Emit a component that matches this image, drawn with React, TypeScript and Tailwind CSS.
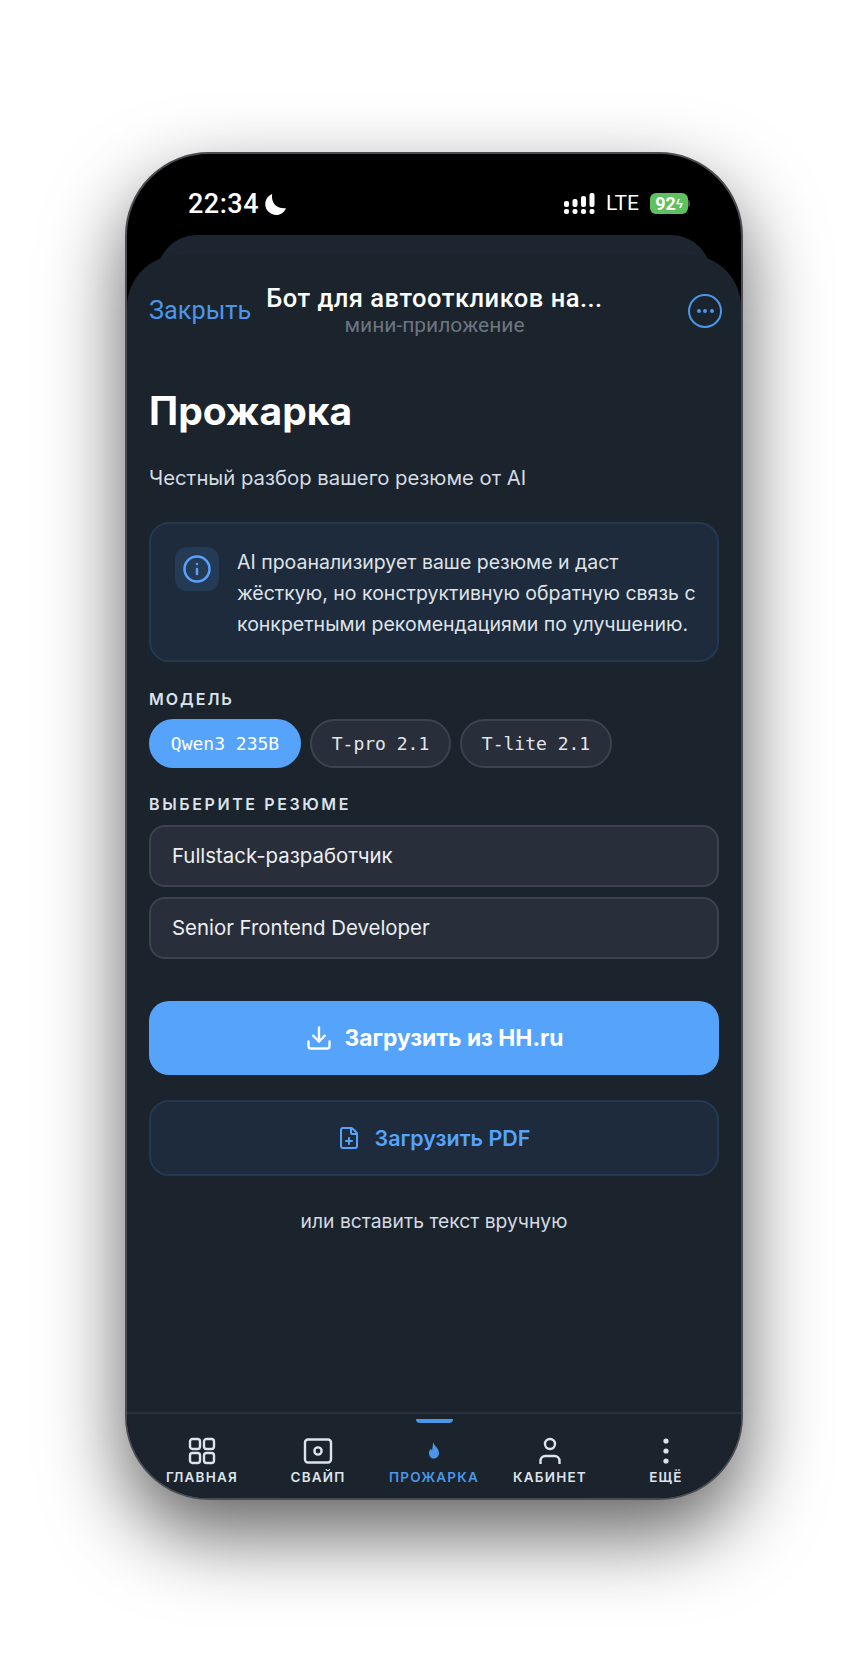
import React from 'react';
import { Download, FilePlus, Info } from 'lucide-react';

const models = [
  { id: 'qwen', name: 'Qwen3 235B', active: true, width: 'w-[152px]' },
  { id: 'tpro', name: 'T-pro 2.1', active: false, width: 'w-[141px]' },
  { id: 'tlite', name: 'T-lite 2.1', active: false, width: 'w-[152px]' },
];

const resumes = ['Fullstack-разработчик', 'Senior Frontend Developer'];

const GridIcon = () => (
  <svg width="28" height="28" viewBox="0 0 28 28" fill="none" stroke="currentColor" strokeWidth="2.4">
    <rect x="2" y="2" width="10" height="10" rx="2.5" />
    <rect x="16" y="2" width="10" height="10" rx="2.5" />
    <rect x="2" y="16" width="10" height="10" rx="2.5" />
    <rect x="16" y="16" width="10" height="10" rx="2.5" />
  </svg>
);

const SwipeIcon = () => (
  <svg width="30" height="28" viewBox="0 0 30 28" fill="none" stroke="currentColor" strokeWidth="2.4">
    <rect x="2" y="2.5" width="26" height="23" rx="3" />
    <circle cx="15" cy="14" r="3.6" />
  </svg>
);

const FlameIcon = () => (
  <svg width="28" height="28" viewBox="0 0 28 28" fill="currentColor">
    <path d="M13.500 5c.4 2.400 1.300 3.500 2.500 4.800 1.500 1.700 3 3.600 3 6.200 0 3.200-2.200 5.500-5 5.500s-5-2.300-5-5.300c0-2 .8-3.400 1.900-4.500.3.800.7 1.300 1.300 1.700.3-2.900.5-5.600 1.300-8.400z" />
  </svg>
);

const UserIcon = () => (
  <svg width="28" height="28" viewBox="0 0 28 28" fill="none" stroke="currentColor" strokeWidth="2.4">
    <circle cx="14" cy="7" r="5" />
    <path d="M4.500 27v-3c0-3 2.300-5 4.800-5h9.400c2.500 0 4.800 2 4.800 5v3" />
  </svg>
);

const DotsIcon = () => (
  <svg width="28" height="28" viewBox="0 0 28 28" fill="currentColor">
    <circle cx="14" cy="4" r="2.600" />
    <circle cx="14" cy="14" r="2.600" />
    <circle cx="14" cy="24" r="2.600" />
  </svg>
);

const tabs = [
  { id: 'home', title: 'ГЛАВНАЯ', icon: GridIcon },
  { id: 'swipe', title: 'СВАЙП', icon: SwipeIcon },
  { id: 'roast', title: 'ПРОЖАРКА', icon: FlameIcon, active: true },
  { id: 'account', title: 'КАБИНЕТ', icon: UserIcon },
  { id: 'more', title: 'ЕЩЁ', icon: DotsIcon },
];

const SignalIcon = () => (
  <svg width="31" height="21" viewBox="0 0 31 21" fill="white">
    <rect x="0" y="8" width="5" height="6" rx="2" />
    <rect x="0" y="16" width="5" height="5" rx="2" />
    <rect x="8.500" y="6" width="5" height="8" rx="2" />
    <rect x="8.500" y="16" width="5" height="5" rx="2" />
    <rect x="17" y="3" width="5" height="11" rx="2" />
    <rect x="17" y="16" width="5" height="5" rx="2" />
    <rect x="25.500" y="0" width="5" height="14" rx="2" />
    <rect x="25.500" y="16" width="5" height="5" rx="2" />
  </svg>
);

const MoonIcon = () => (
  <svg width="23" height="23" viewBox="0 0 22 22" fill="white">
    <path d="M7.800 1C6.700 9.500 11.500 15.200 21 14.500 19.500 18.500 15.800 21 11.700 21 6 21 1.200 16.500 1.200 10.800 1.200 6.400 3.800 2.600 7.800 1z" />
  </svg>
);

export default function App() {
  return (
    <div className="w-[868px] h-[1660px] bg-white overflow-hidden pt-[152px] pl-[125px] font-['Inter',sans-serif]">
      <div className="w-[618px] h-[1348px] rounded-[84px] bg-black border-2 border-[#4a4c52] overflow-hidden flex flex-col shadow-[0_34px_80px_rgba(0,0,0,0.62)]">
        {/* Status bar */}
        <div className="h-[81px] shrink-0 flex items-start justify-between pt-[35px] pl-[61px] pr-[51px]">
          <div className="flex items-center gap-[5px]">
            <span className="text-[27px] leading-[30px] font-medium text-white font-['Roboto',sans-serif] tracking-[0.5px]">22:34</span>
            <MoonIcon />
          </div>
          <div className="flex items-center pt-[2px]">
            <SignalIcon />
            <span className="ml-[11px] text-[21px] leading-[24px] text-white font-['Roboto',sans-serif]">LTE</span>
            <div className="ml-[11px] w-[38px] h-[21px] rounded-[6px] bg-[#5fc05f] flex items-center justify-center text-[18px] leading-[21px] font-bold text-white font-['Roboto',sans-serif]">
              92<span className="text-[13px]">ϟ</span>
            </div>
            <div className="w-[2px] h-[7px] rounded-r-sm bg-[#444]" />
          </div>
        </div>

        {/* Telegram sheet */}
        <div className="mx-[30px] h-[40px] shrink-0 rounded-t-[44px] bg-[#1d2531] -mb-[20px]" />
        <div className="flex-1 min-h-0 rounded-t-[52px] bg-[#1b232d] flex flex-col relative">
          <div className="flex items-start pl-[22px] pr-[19px] pt-[28px] h-[70px]">
            <span className="w-[102px] shrink-0 text-[25.300px] leading-[34px] text-[#4a97ea] mt-[11px] font-['Roboto',sans-serif] whitespace-nowrap">Закрыть</span>
            <div className="flex-1 flex flex-col items-center font-['Roboto',sans-serif] pr-[2px]">
              <span className="text-[25.500px] leading-[30px] font-medium text-white whitespace-nowrap tracking-[0.5px]">Бот для автооткликов на...</span>
              <span className="text-[21px] leading-[24px] text-[#6d7580] whitespace-nowrap">мини-приложение</span>
            </div>
            <div className="w-[102px] shrink-0 flex justify-end">
              <div className="w-[34px] h-[34px] mt-[11px] rounded-full border-2 border-[#4a97ea] flex items-center justify-center gap-[2.5px]">
                <span className="w-[4px] h-[4px] rounded-full bg-[#4a97ea]" />
                <span className="w-[4px] h-[4px] rounded-full bg-[#4a97ea]" />
                <span className="w-[4px] h-[4px] rounded-full bg-[#4a97ea]" />
              </div>
            </div>
          </div>

          {/* Content */}
          <div className="flex-1 min-h-0 px-[22px] pt-[63px]">
            <h1 className="text-[39px] leading-[46px] font-bold text-white">Прожарка</h1>
            <p className="mt-[30px] text-[20.300px] leading-[28px] text-[#d5dbe3]">Честный разбор вашего резюме от AI</p>

            <div className="mt-[30px] h-[140px] rounded-[20px] border-2 border-[#243850] bg-[#1e2b3d] flex items-start pl-[24px] pt-[23px]">
              <div className="w-[44px] h-[44px] shrink-0 rounded-[12px] bg-[#253a55] flex items-center justify-center text-[#56a3fb]">
                <Info size={30} strokeWidth={2} />
              </div>
              <p className="ml-[18px] w-[320px] text-[19.500px] leading-[31px] text-[#dfe3e8] whitespace-nowrap">
                AI проанализирует ваше резюме и даст<br />
                жёсткую, но конструктивную обратную связь с<br />
                конкретными рекомендациями по улучшению.
              </p>
            </div>

            <div className="mt-[27px] text-[16px] leading-[20px] font-semibold tracking-[2px] text-[#dbe4ec]">МОДЕЛЬ</div>
            <div className="mt-[10px] flex gap-[9px]">
              {models.map((model) => (
                <button
                  key={model.id}
                  className={`${model.width} h-[49px] rounded-full border-2 text-[18px] font-['DejaVu_Sans_Mono',monospace] ${
                    model.active
                      ? 'bg-[#56a3fb] border-[#56a3fb] text-white'
                      : 'bg-[#282e3a] border-[#3c424e] text-[#e3e6ea]'
                  }`}
                >
                  {model.name}
                </button>
              ))}
            </div>

            <div className="mt-[26px] text-[16px] leading-[20px] font-semibold tracking-[2.600px] text-[#dbe4ec]">ВЫБЕРИТЕ РЕЗЮМЕ</div>
            <div className="mt-[11px] flex flex-col gap-[10px]">
              {resumes.map((resume) => (
                <div
                  key={resume}
                  className="h-[62px] rounded-[16px] border-2 border-[#3c424e] bg-[#282e3a] flex items-center pl-[21px] text-[20.400px] text-[#eceef1]"
                >
                  {resume}
                </div>
              ))}
            </div>

            <button className="mt-[42px] w-full h-[74px] rounded-[20px] bg-[#56a3fb] flex items-center justify-center gap-[12px] text-white text-[22.800px] font-bold">
              <Download size={28} strokeWidth={2} />
              Загрузить из HH.ru
            </button>
            <button className="mt-[25px] w-full h-[76px] rounded-[20px] border-2 border-[#243850] bg-[#1e2b3d] flex items-center justify-center gap-[13px] text-[#56a3fb] text-[21.500px] font-semibold">
              <FilePlus size={24} strokeWidth={2} />
              Загрузить PDF
            </button>
            <p className="mt-[32px] text-center text-[19.300px] leading-[26px] text-[#d5dbe3]">или вставить текст вручную</p>
          </div>

          {/* Bottom nav */}
          <nav className="h-[86px] shrink-0 border-t-2 border-[#2a313c] flex px-[17px]">
            {tabs.map((tab) => (
              <div
                key={tab.id}
                className={`flex-1 flex flex-col items-center relative pt-[23px] ${tab.active ? 'text-[#4a97ea]' : 'text-[#dde4ec]'}`}
              >
                {tab.active && <span className="absolute top-[5px] w-[37px] h-[4px] rounded-b-sm bg-[#4a97ea]" />}
                <tab.icon />
                <span className="text-[13.500px] leading-[18px] font-semibold tracking-[1.200px] mt-[3px] whitespace-nowrap">{tab.title}</span>
              </div>
            ))}
          </nav>
        </div>
      </div>
    </div>
  );
}
